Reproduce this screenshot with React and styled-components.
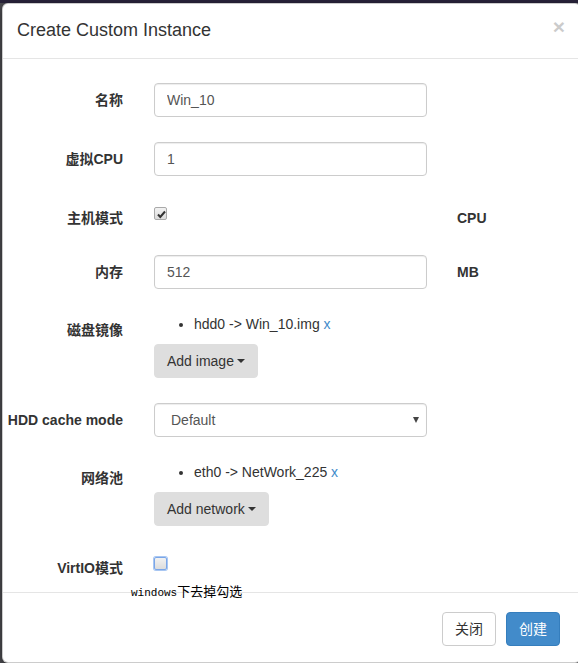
import React from "react";
import styled, { createGlobalStyle } from "styled-components";

const GlobalStyle = createGlobalStyle`
  html, body {
    margin: 0;
    padding: 0;
    height: 100%;
    overflow: hidden;
  }
  body {
    background: #29233a;
    font-family: "Liberation Sans", Arial, "Noto Sans CJK SC", sans-serif;
    font-size: 14px;
    line-height: 20px;
    color: #333;
  }
  * {
    box-sizing: border-box;
  }
`;

const Page = styled.div`
  padding-top: 3px;
  height: 100vh;
`;

const Backdrop = styled.div`
  background: #4c4c50;
  padding-left: 2px;
  height: 100%;
`;

const Modal = styled.div`
  width: 579px;
  height: 100%;
  background: #fff;
  border: 1px solid rgba(0, 0, 0, 0.2);
  border-radius: 6px;
  box-shadow: 0 3px 9px rgba(0, 0, 0, 0.5);
`;

const Header = styled.div`
  display: flex;
  justify-content: space-between;
  align-items: flex-start;
  padding: 14px 15px 14px 14px;
  border-bottom: 1px solid #e5e5e5;
`;

const Title = styled.h4`
  margin: 0;
  font-size: 18px;
  font-weight: 500;
  line-height: 1.42857;
  color: #333;
`;

const Close = styled.button`
  border: 0;
  background: transparent;
  padding: 0;
  margin-top: -2px;
  font-family: "Liberation Sans", Arial, sans-serif;
  font-size: 21px;
  font-weight: bold;
  line-height: 1;
  color: #000;
  opacity: 0.2;
  cursor: pointer;
`;

const Body = styled.form`
  padding: 24px 20px 0 0;
`;

const FormGroup = styled.div`
  display: grid;
  grid-template-columns: 121px 273px auto;
  column-gap: 30px;
  align-items: start;
  min-height: ${(p) => p.$h || 0}px;
  margin-bottom: 25px;

  &:last-of-type {
    margin-bottom: 0;
  }
`;

const Label = styled.label`
  text-align: right;
  font-weight: bold;
  white-space: nowrap;
  padding-top: ${(p) => p.$pt ?? 7}px;
  padding-right: 1px;
  line-height: 20px;
`;

const Unit = styled.span`
  font-weight: bold;
  padding-top: ${(p) => p.$pt ?? 7}px;
  line-height: 20px;
`;

const Input = styled.input`
  width: 100%;
  height: 34px;
  padding: 6px 12px;
  font: inherit;
  font-size: 14px;
  color: #555;
  background: #fff;
  border: 1px solid #ccc;
  border-radius: 4px;
  box-shadow: inset 0 1px 1px rgba(0, 0, 0, 0.075);
  outline: none;
`;

const SelectWrap = styled.div`
  position: relative;
`;

const Select = styled.select`
  width: 100%;
  height: 34px;
  padding: 6px 12px 6px 16px;
  font: inherit;
  font-size: 14px;
  color: #555;
  background: #fff;
  border: 1px solid #ccc;
  border-radius: 4px;
  box-shadow: inset 0 1px 1px rgba(0, 0, 0, 0.075);
  appearance: none;
  outline: none;
`;

const SelectArrow = styled.span`
  position: absolute;
  right: 8px;
  top: 14px;
  width: 0;
  height: 0;
  border-top: 6px solid #444;
  border-left: 3px solid transparent;
  border-right: 3px solid transparent;
  pointer-events: none;
`;

const CheckField = styled.div`
  padding-top: 6px;
`;

const Check = styled.span`
  display: block;
  width: 13px;
  height: 13px;
  border-radius: 2px;
  border: 1px solid ${(p) => (p.$focus ? "#7aa6e8" : "#a9a9a9")};
  box-shadow: ${(p) => (p.$focus ? "0 0 0 1px #a8c6f2" : "none")};
  background: linear-gradient(#f2f2f2, #dcdcdc);
  position: relative;

  svg {
    position: absolute;
    left: 1px;
    top: 1px;
  }
`;

const List = styled.ul`
  margin: 0 0 10px;
  padding-left: 40px;
  list-style: disc;
  line-height: 20px;
`;

const RemoveLink = styled.a`
  color: #428bca;
  text-decoration: none;
`;

const DropButton = styled.button`
  display: inline-flex;
  align-items: center;
  height: 34px;
  padding: 6px 12px;
  font: inherit;
  font-size: 14px;
  color: #333;
  background: #dedede;
  border: 1px solid #dedede;
  border-radius: 4px;
  cursor: pointer;
`;

const Caret = styled.span`
  display: inline-block;
  width: 0;
  height: 0;
  margin-left: 3px;
  border-top: 4px solid #333;
  border-left: 4px solid transparent;
  border-right: 4px solid transparent;
`;

const Note = styled.p`
  margin: 4px 0 -9px 128px;
  position: relative;
  font-family: "Noto Sans CJK SC", serif;
  font-size: 13px;
  line-height: 16px;
  color: #000;
`;

const NoteLatin = styled.span`
  font-family: "Liberation Mono", monospace;
  font-size: 11px;
`;

const Footer = styled.div`
  display: flex;
  justify-content: flex-end;
  gap: 10px;
  padding: 19px 20px 20px;
  border-top: 1px solid #e5e5e5;
`;

const Button = styled.button`
  height: 34px;
  padding: 6px 12px;
  font: inherit;
  font-size: 14px;
  border-radius: 4px;
  border: 1px solid ${(p) => (p.$primary ? "#357ebd" : "#ccc")};
  background: ${(p) => (p.$primary ? "#428bca" : "#fff")};
  color: ${(p) => (p.$primary ? "#fff" : "#333")};
  cursor: pointer;
`;

const CheckMark = () => (
  <svg width="11" height="11" viewBox="0 0 11 11">
    <path d="M2 5.5 L4.3 8 L9 2.5" fill="none" stroke="#333" strokeWidth="2" />
  </svg>
);

export default function App() {
  return (
    <Page>
      <GlobalStyle />
      <Backdrop>
        <Modal>
          <Header>
            <Title>Create Custom Instance</Title>
            <Close type="button">×</Close>
          </Header>
          <Body onSubmit={(e) => e.preventDefault()}>
            <FormGroup>
              <Label>名称</Label>
              <Input defaultValue="Win_10" />
            </FormGroup>
            <FormGroup>
              <Label>虚拟CPU</Label>
              <Input defaultValue="1" />
            </FormGroup>
            <FormGroup $h={29}>
              <Label $pt={7}>主机模式</Label>
              <CheckField>
                <Check>
                  <CheckMark />
                </Check>
              </CheckField>
              <Unit $pt={7}>CPU</Unit>
            </FormGroup>
            <FormGroup>
              <Label>内存</Label>
              <Input defaultValue="512" />
              <Unit>MB</Unit>
            </FormGroup>
            <FormGroup>
              <Label $pt={6}>磁盘镜像</Label>
              <div>
                <List>
                  <li>
                    hdd0 -&gt; Win_10.img <RemoveLink href="#">x</RemoveLink>
                  </li>
                </List>
                <DropButton type="button">
                  Add image
                  <Caret />
                </DropButton>
              </div>
            </FormGroup>
            <FormGroup>
              <Label>HDD cache mode</Label>
              <SelectWrap>
                <Select defaultValue="default">
                  <option value="default">Default</option>
                </Select>
                <SelectArrow />
              </SelectWrap>
            </FormGroup>
            <FormGroup>
              <Label $pt={6}>网络池</Label>
              <div>
                <List>
                  <li>
                    eth0 -&gt; NetWork_225 <RemoveLink href="#">x</RemoveLink>
                  </li>
                </List>
                <DropButton type="button">
                  Add network
                  <Caret />
                </DropButton>
              </div>
            </FormGroup>
            <FormGroup $h={28}>
              <Label $pt={7}>VirtIO模式</Label>
              <CheckField>
                <Check $focus />
              </CheckField>
            </FormGroup>
            <Note>
              <NoteLatin>windows</NoteLatin>下去掉勾选
            </Note>
          </Body>
          <Footer>
            <Button type="button">关闭</Button>
            <Button type="button" $primary>
              创建
            </Button>
          </Footer>
        </Modal>
      </Backdrop>
    </Page>
  );
}
